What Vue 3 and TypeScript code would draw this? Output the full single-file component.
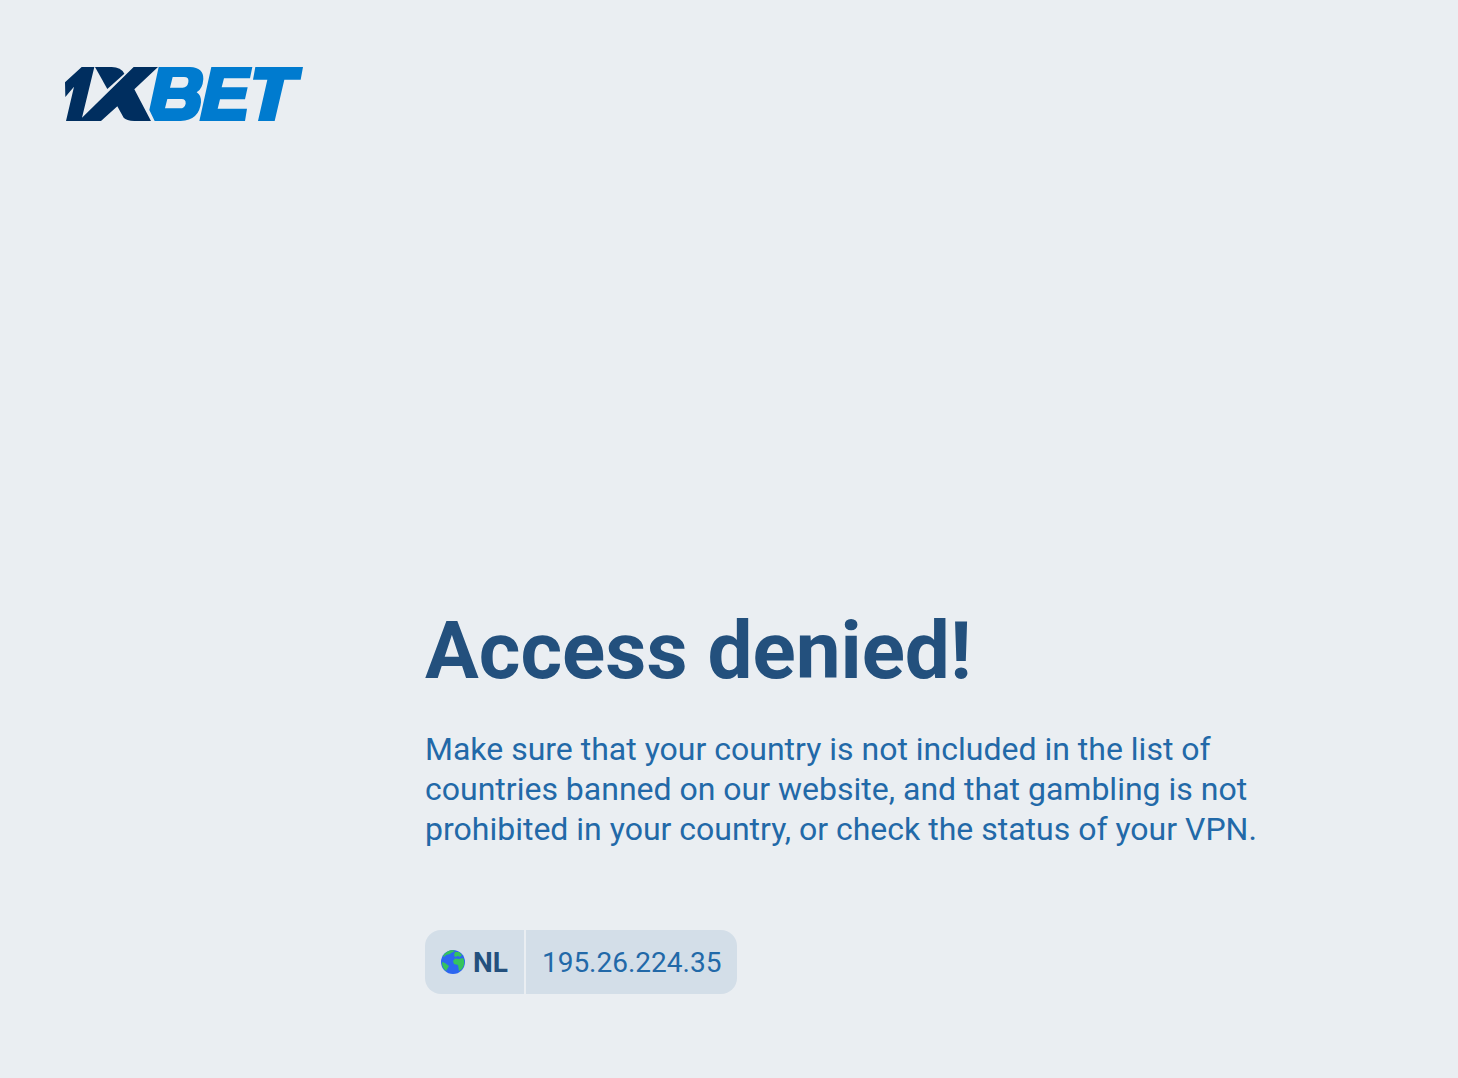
<script setup lang="ts">
const countryCode: string = 'NL'
const ipAddress: string = '195.26.224.35'
</script>

<template>
  <div class="page">
    <header class="header">
      <svg class="logo" viewBox="27 33 720 168" role="img" aria-label="1xBet">
        <g fill="#002e5f">
          <path d="M30 82 80 36H118L81 188 236 36H309L238 103 288 198H238Q214 196 206 188L187 154 138 198H33L57 95 31 126Z" />
          <path d="M120 36H170Q198 36 208 56L157 102Z" />
        </g>
        <g fill="#007bcf" fill-rule="evenodd" transform="translate(255 0)">
          <path d="M56 36H150Q191 38 190 72Q188 102 170 112Q184 120 183 142Q178 196 122 198H44L28 165ZM98 66 90 98H128Q142 98 145 82Q148 66 132 66ZM82 132 75 160H120Q134 160 137 146Q138 132 125 132Z" />
          <path d="M214 36H337L330 70H252L245 97H323L315 133H240L233 161H321L315 198H178Z" />
          <path d="M346 36H489L482 74H433L404 198H354L382 74H339Z" />
        </g>
      </svg>
    </header>
    <main class="content">
      <h1 class="title">Access denied!</h1>
      <p class="message">
        Make sure that your country is not included in the list of countries banned on our website,
        and that gambling is not prohibited in your country, or check the status of your VPN.
      </p>
      <div class="info">
        <span class="cell country">
          <svg class="globe" viewBox="0 0 24 24" aria-hidden="true">
            <circle cx="12" cy="12" r="12" fill="#2c66f0" />
            <path fill="#35c45c" d="M2 6Q5 1 11 0L14 1 10 3 9 4 5 5 3 7ZM14 2 18 2 21 5 19 7 17 6 14 7 13 5ZM12 11 14 8.500 18 9 22 8Q25 13 21 19L18 21 17 15 13 14ZM1 12 4 13 8 16 5 21Q1 18 1 12Z" />
          </svg>
          <strong>{{ countryCode }}</strong>
        </span>
        <span class="cell">{{ ipAddress }}</span>
      </div>
    </main>
  </div>
</template>

<style>
body {
  margin: 0;
  background: #eaeef2;
}
</style>

<style scoped>
.page {
  box-sizing: border-box;
  display: flex;
  flex-direction: column;
  justify-content: space-between;
  min-height: 100vh;
  padding: 66px 64px 84px;
  font-family: Roboto, sans-serif;
  color: #2269a8;
}

.header {
  display: flex;
}

.logo {
  width: 240px;
  height: 56px;
}

.content {
  box-sizing: border-box;
  width: 100%;
  max-width: 1088px;
  margin: 0 auto;
  padding-left: 240px;
}

.title {
  margin: 0 0 30px;
  font-size: 80px;
  line-height: 96px;
  font-weight: 700;
  color: #23507d;
}

.message {
  margin: 0 0 81px;
  font-size: 32px;
  line-height: 40px;
}

.info {
  display: flex;
  gap: 2px;
  width: fit-content;
  overflow: hidden;
  border-radius: 16px;
}

.cell {
  display: flex;
  align-items: center;
  gap: 8px;
  height: 64px;
  padding: 0 16px;
  font-size: 28px;
  background: #d3dee8;
}

.country {
  color: #23507d;
}

.globe {
  width: 24px;
  height: 24px;
}
</style>
